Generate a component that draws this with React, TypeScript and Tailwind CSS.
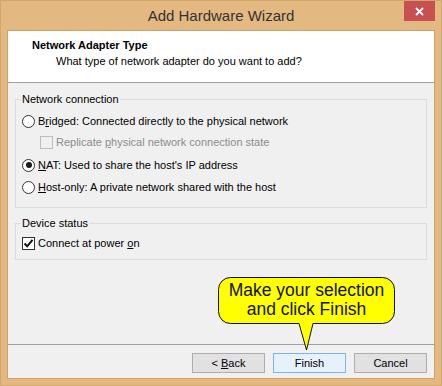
const ui = { fontFamily: '"Liberation Sans", Arial, sans-serif' };

function Radio({ checked }: { checked?: boolean }) {
  return (
    <span className="w-[13px] h-[13px] rounded-full border border-[#333333] bg-white flex items-center justify-center shrink-0">
      {checked && <span className="w-[6px] h-[6px] rounded-full bg-[#1a1a1a]" />}
    </span>
  );
}

function Check({ checked, disabled }: { checked?: boolean; disabled?: boolean }) {
  return (
    <span
      className={
        'w-[13px] h-[13px] border flex items-center justify-center shrink-0 ' +
        (disabled ? 'border-[#bcbcbc] bg-[#f0f0f0]' : 'border-[#333333] bg-white')
      }
    >
      {checked && (
        <svg width="11" height="11" viewBox="0 0 11 11">
          <path d="M1.5 5.5 L4.2 8.3 L9.5 1.8" fill="none" stroke="#111" strokeWidth="2" />
        </svg>
      )}
    </span>
  );
}

function Button({ children, focused }: { children: React.ReactNode; focused?: boolean }) {
  return (
    <button
      className={
        'w-[73px] h-[20px] border text-[11px] leading-none text-black flex items-center justify-center ' +
        (focused ? 'border-[#7eb4ea] bg-[#e5f1fb]' : 'border-[#adadad] bg-[#e1e1e1]')
      }
    >
      {children}
    </button>
  );
}

export default function App() {
  return (
    <div style={ui} className="w-[442px] h-[386px] bg-[#e4b981] border border-[#d2a66c] flex flex-col">
      {/* title bar */}
      <div className="h-[29px] grid grid-cols-[1fr_auto_1fr]">
        <div />
        <div className="text-[15px] leading-[29px] text-[#333333]">Add Hardware Wizard</div>
        <div className="flex justify-end pr-[6px]">
          <button className="w-[31px] h-[20px] bg-[#c75050] flex items-center justify-center">
            <svg width="9" height="9" viewBox="0 0 9 9">
              <path d="M1 1 L8 8 M8 1 L1 8" stroke="white" strokeWidth="1.8" />
            </svg>
          </button>
        </div>
      </div>

      {/* client area */}
      <div className="mx-[6px] mb-[6px] flex-1 border border-[#c9a26d] bg-[#f0f0f0] flex flex-col relative">
        <div className="h-[52px] bg-white border-b border-[#a0a0a0] pl-[24px] pt-[6px] text-black">
          <div className="text-[11px] leading-[16px] font-bold">Network Adapter Type</div>
          <div className="text-[11px] leading-[16px] pl-[24px]">What type of network adapter do you want to add?</div>
        </div>

        <div className="flex-1 px-[7px] text-[11px] text-black">
          <fieldset className="mt-[8px] border border-[#dcdcdc] pl-[5px] pr-[6px] pb-[12px]">
            <legend className="px-[1px] leading-[16px]">Network connection</legend>
            <div className="pl-[1px] mt-[6px] flex flex-col">
              <label className="h-[16px] flex items-center gap-[3px]">
                <Radio />
                <span>
                  B<span className="underline">r</span>idged: Connected directly to the physical network
                </span>
              </label>
              <label className="h-[16px] mt-[5px] pl-[18px] flex items-center gap-[3px] text-[#8c8c8c]">
                <Check disabled />
                <span>
                  Replicate <span className="underline">p</span>hysical network connection state
                </span>
              </label>
              <label className="h-[16px] mt-[7px] flex items-center gap-[3px]">
                <Radio checked />
                <span>
                  <span className="underline">N</span>AT: Used to share the host's IP address
                </span>
              </label>
              <label className="h-[16px] mt-[6px] flex items-center gap-[3px]">
                <Radio />
                <span>
                  <span className="underline">H</span>ost-only: A private network shared with the host
                </span>
              </label>
            </div>
          </fieldset>

          <fieldset className="mt-[7px] border border-[#dcdcdc] pl-[5px] pr-[6px] pb-[8px]">
            <legend className="px-[1px] leading-[16px]">Device status</legend>
            <div className="pl-[1px] mt-[4px]">
              <label className="h-[16px] flex items-center gap-[3px]">
                <Check checked />
                <span>
                  Connect at power <span className="underline">o</span>n
                </span>
              </label>
            </div>
          </fieldset>
        </div>

        <div className="h-[34px] border-t border-[#a0a0a0] pt-[8px] pr-[7px] flex justify-end gap-[8px]">
          <Button>
            &lt; <span className="underline ml-[3px]">B</span>ack
          </Button>
          <Button focused>Finish</Button>
          <Button>Cancel</Button>
        </div>

        {/* callout */}
        <div className="absolute left-[210px] top-[246px] w-[178px] h-[74px]">
          <svg width="178" height="74" viewBox="0 0 178 74" className="absolute inset-0">
            <path
              d="M12.5 0.5 H164.5 A12 12 0 0 1 176.5 12.5 V34.5 A12 12 0 0 1 164.5 46.5 H95 L88.5 73 L81 46.5 H12.5 A12 12 0 0 1 0.5 34.5 V12.5 A12 12 0 0 1 12.5 0.5 Z"
              fill="#ffff00"
              stroke="#111"
              strokeWidth="1"
            />
          </svg>
          <div className="relative w-[177px] pt-[4px] text-center text-[17.5px] leading-[19px] text-[#111]">
            Make your selection
            <br />
            and click Finish
          </div>
        </div>
      </div>
    </div>
  );
}
